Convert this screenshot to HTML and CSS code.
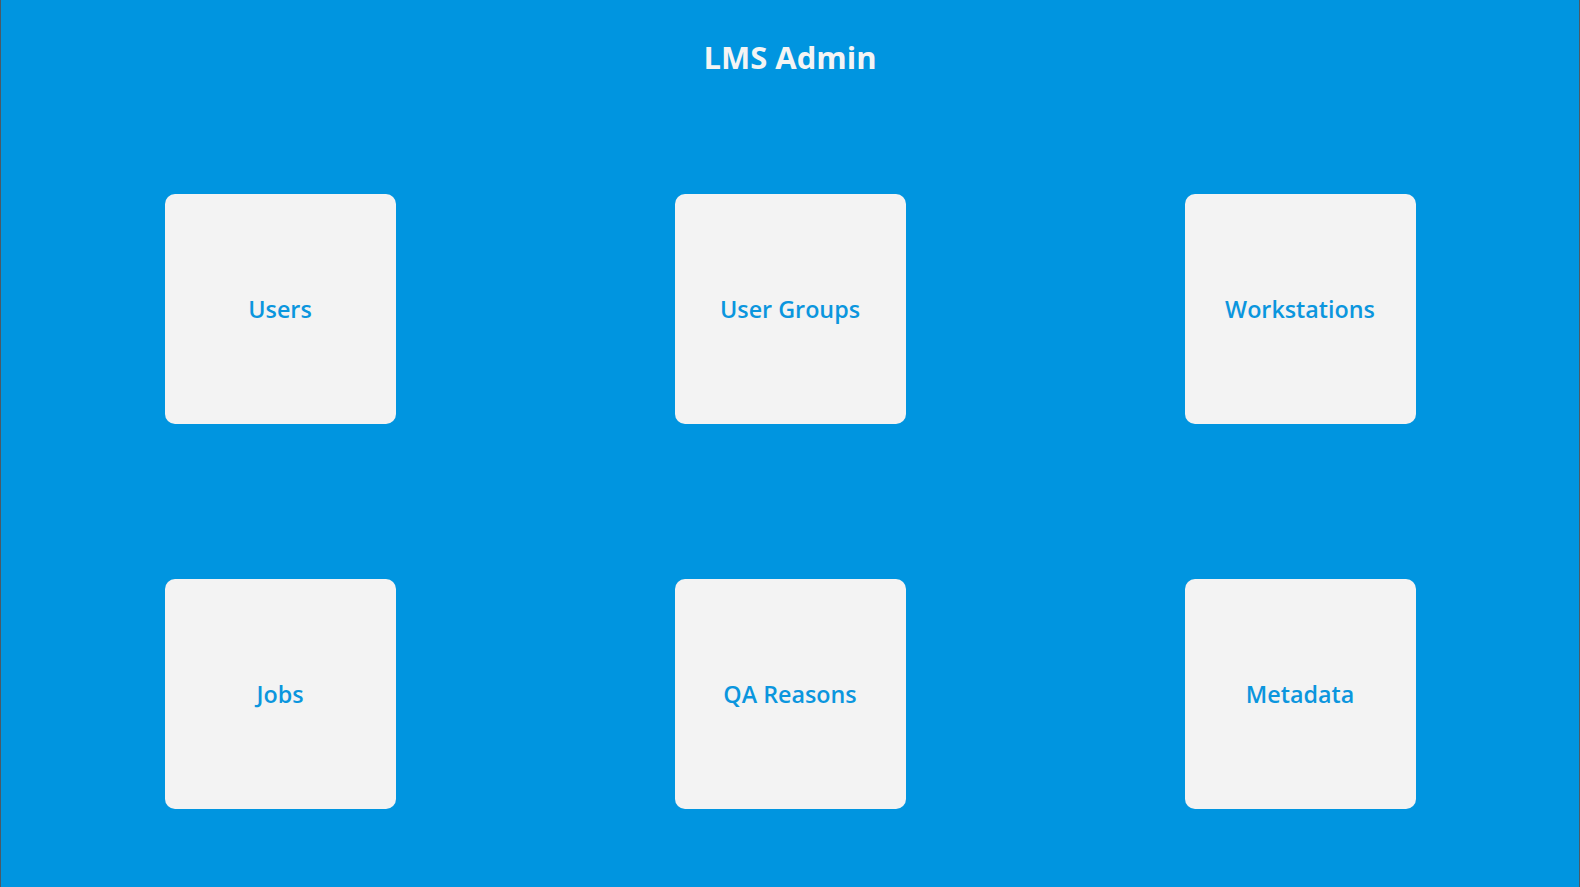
FILE: index.html
```html
<!DOCTYPE html>
<html lang="en">
<head>
<meta charset="utf-8">
<title>LMS Admin</title>
<link rel="stylesheet" href="styles.css">
</head>
<body>
<div class="app">
  <header class="header">
    <h1 class="title">LMS Admin</h1>
  </header>
  <main class="grid">
    <a class="tile" href="#">Users</a>
    <a class="tile" href="#">User Groups</a>
    <a class="tile" href="#">Workstations</a>
    <a class="tile" href="#">Jobs</a>
    <a class="tile" href="#">QA Reasons</a>
    <a class="tile" href="#">Metadata</a>
  </main>
</div>
</body>
</html>
```
FILE: styles.css
```css
html, body {
  margin: 0;
  padding: 0;
  height: 100%;
}
body {
  background: #0095e0;
  font-family: "Open Sans", "Noto Sans", sans-serif;
}
.app {
  box-sizing: border-box;
  min-height: 100%;
  border-left: 1px solid #4a5a66;
  border-right: 1px solid #4a5a66;
  background: #0095e0;
}
.header {
  padding-top: 39px;
  display: flex;
  justify-content: center;
}
.title {
  margin: 0;
  font-size: 31px;
  line-height: 36px;
  font-weight: 700;
  color: #f4f4f4;
}
.grid {
  display: grid;
  grid-template-columns: repeat(3, 1fr);
  justify-items: center;
  row-gap: 155px;
  padding: 0 24px;
  margin-top: 119px;
}
.tile {
  width: 231px;
  height: 230px;
  border-radius: 10px;
  background: #f3f3f3;
  display: flex;
  align-items: center;
  justify-content: center;
  text-decoration: none;
  color: #0b96de;
  font-size: 23.3px;
  font-weight: 600;
}
```
